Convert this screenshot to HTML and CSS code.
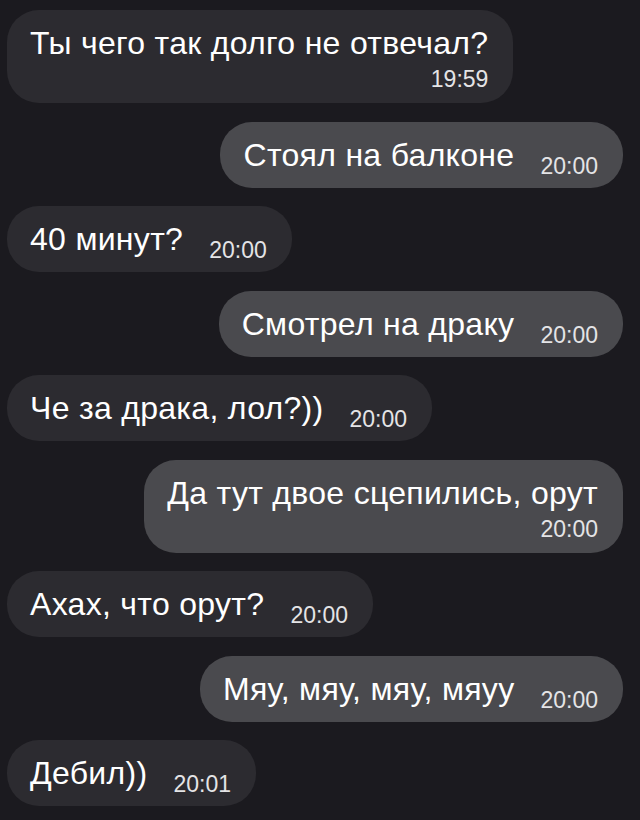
FILE: index.html
```html
<!DOCTYPE html>
<html lang="ru">
<head>
<meta charset="UTF-8">
<meta name="viewport" content="width=device-width, initial-scale=1.0">
<title>Чат</title>
<link rel="stylesheet" href="styles.css">
</head>
<body>
<div class="chat">
    <div class="msg in stack">
        <span class="text">Ты чего так долго не отвечал?</span>
        <span class="time">19:59</span>
    </div>
    <div class="msg out">
        <span class="text">Стоял на балконе</span>
        <span class="time">20:00</span>
    </div>
    <div class="msg in">
        <span class="text">40 минут?</span>
        <span class="time">20:00</span>
    </div>
    <div class="msg out">
        <span class="text">Смотрел на драку</span>
        <span class="time">20:00</span>
    </div>
    <div class="msg in">
        <span class="text">Че за драка, лол?))</span>
        <span class="time">20:00</span>
    </div>
    <div class="msg out stack">
        <span class="text">Да тут двое сцепились, орут</span>
        <span class="time">20:00</span>
    </div>
    <div class="msg in">
        <span class="text">Ахах, что орут?</span>
        <span class="time">20:00</span>
    </div>
    <div class="msg out">
        <span class="text">Мяу, мяу, мяу, мяуу</span>
        <span class="time">20:00</span>
    </div>
    <div class="msg in">
        <span class="text">Дебил))</span>
        <span class="time">20:01</span>
    </div>
</div>
</body>
</html>
```

FILE: styles.css
```css
html, body {
    margin: 0;
    padding: 0;
    width: 100%;
    height: 100%;
    background-color: #1b1a1f;
    font-family: "Liberation Sans", Arial, sans-serif;
    color: #fff;
}
.chat {
    display: flex;
    flex-direction: column;
    gap: 18.5px;
    padding: 10px 17px 0 7px;
}
.msg {
    display: flex;
    align-items: flex-end;
    padding: 15px 25px 15px 23px;
    border-radius: 32px;
    max-width: 580px;
}
.msg.in {
    align-self: flex-start;
    background-color: #2c2b30;
}
.msg.out {
    align-self: flex-end;
    background-color: #4a4a4e;
}
.msg.stack {
    flex-direction: column;
    padding-bottom: 17px;
}
.text {
    font-size: 32px;
    line-height: 36px;
    letter-spacing: 0.3px;
    white-space: nowrap;
}
.time {
    font-size: 23px;
    line-height: 14px;
    color: #e4e4e6;
    margin-left: 26px;
}
.msg.stack .time {
    align-self: flex-end;
    margin-top: 11px;
    margin-left: 0;
}
```
